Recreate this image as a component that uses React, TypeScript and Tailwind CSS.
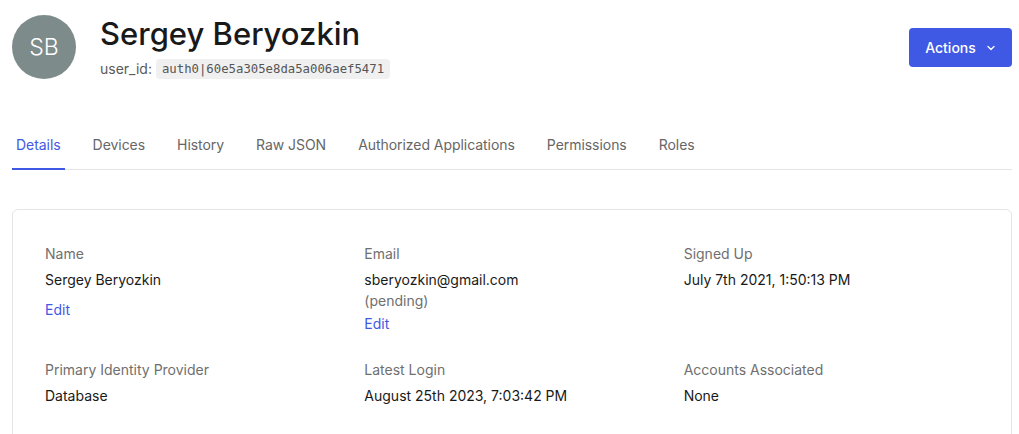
const tabs = ["Details", "Devices", "History", "Raw JSON", "Authorized Applications", "Permissions", "Roles"];

function Field({ label, children }: { label: string; children: React.ReactNode }) {
  return (
    <div className="flex flex-col">
      <div className="text-sm leading-5 text-[#6f6f6f]">{label}</div>
      <div className="mt-[5px] text-sm leading-[21px] text-[#191919]">{children}</div>
    </div>
  );
}

export default function App() {
  return (
    <main className="w-[1012px] bg-white pl-3 pt-[15px] font-['Inter',sans-serif] text-[#191919]">
      <header className="flex items-start justify-between">
        <div className="flex items-center gap-6">
          <div className="flex h-16 w-16 items-center justify-center rounded-full bg-[#7e8b8b] text-[23px] font-light text-white">
            SB
          </div>
          <div className="flex flex-col">
            <h1 className="text-[31px] font-medium leading-9 text-[#191919]">Sergey Beryozkin</h1>
            <div className="mt-[7px] flex items-center gap-1 text-sm text-[#5a5a5a]">
              <span>user_id:</span>
              <code className="rounded bg-[#f0f0f0] px-[6px] py-[2px] font-['DejaVu_Sans_Mono',monospace] text-[12.3px] leading-4 text-[#555]">
                auth0|60e5a305e8da5a006aef5471
              </code>
            </div>
          </div>
        </div>
        <button className="mt-[13px] flex h-[39px] w-[103px] items-center justify-center gap-2.5 rounded bg-[#3f59e4] text-sm font-medium text-white">
          Actions
          <svg width="10" height="10" viewBox="0 0 10 10" fill="none" stroke="currentColor" strokeWidth="1.3" strokeLinecap="round" strokeLinejoin="round">
            <path d="M2 3.5l3 3 3-3" />
          </svg>
        </button>
      </header>

      <nav className="mt-[56px] flex gap-6 border-b border-[#e5e5e5]">
        {tabs.map((t, i) => (
          <div
            key={t}
            className={
              i === 0
                ? "-mb-px border-b-2 border-[#3f59e4] px-1 pb-[12px] text-sm leading-5 tracking-[-0.05px] text-[#3f59e4]"
                : "px-1 pb-[14px] text-sm leading-5 tracking-[-0.05px] text-[#666]"
            }
          >
            {t}
          </div>
        ))}
      </nav>

      <section className="mt-[39px] rounded-md border border-[#e5e5e5] px-8 pb-10 pt-[34px]">
        <div className="grid grid-cols-3 gap-x-6 gap-y-[26px]">
          <Field label="Name">
            <div>Sergey Beryozkin</div>
            <a className="mt-[9px] block text-[#3f59e4]">Edit</a>
          </Field>
          <Field label="Email">
            <div>sberyozkin@gmail.com</div>
            <div className="text-[#6f6f6f]">(pending)</div>
            <a className="mt-0.5 block text-[#3f59e4]">Edit</a>
          </Field>
          <Field label="Signed Up">
            <div>July 7th 2021, 1:50:13 PM</div>
          </Field>
          <Field label="Primary Identity Provider">
            <div>Database</div>
          </Field>
          <Field label="Latest Login">
            <div>August 25th 2023, 7:03:42 PM</div>
          </Field>
          <Field label="Accounts Associated">
            <div>None</div>
          </Field>
        </div>
      </section>
    </main>
  );
}
